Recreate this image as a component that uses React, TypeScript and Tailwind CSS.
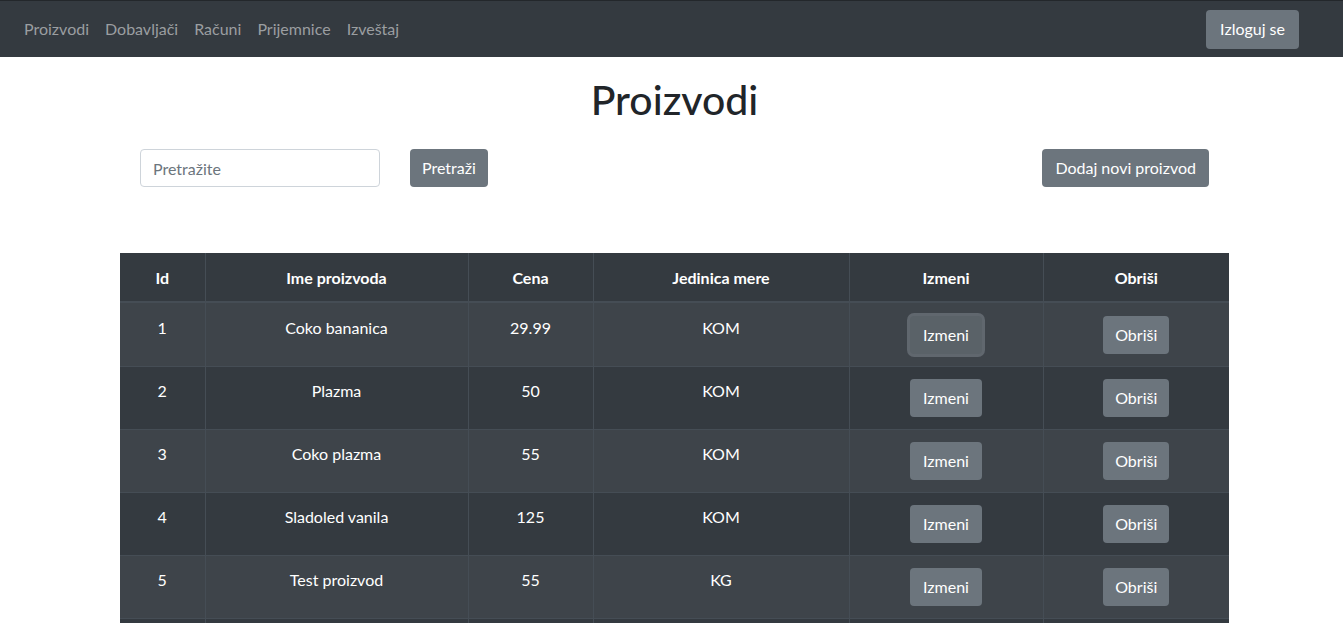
import React from "react";

const rows = [
  { id: 1, name: "Coko bananica", price: "29.99", unit: "KOM" },
  { id: 2, name: "Plazma", price: "50", unit: "KOM" },
  { id: 3, name: "Coko plazma", price: "55", unit: "KOM" },
  { id: 4, name: "Sladoled vanila", price: "125", unit: "KOM" },
  { id: 5, name: "Test proizvod", price: "55", unit: "KG" },
  { id: 6, name: "Test 2", price: "10", unit: "KOM" },
];

const font = { fontFamily: "Lato, 'Noto Sans', sans-serif" };

export default function App() {
  return (
    <div className="min-h-screen bg-white text-[16px] text-[#212529]" style={font}>
      <nav className="flex h-[57px] items-center border-t border-[#23272b] bg-[#343a40] pl-4 pr-[44px]">
        <div className="flex flex-1 items-center">
          {["Proizvodi", "Dobavljači", "Računi", "Prijemnice", "Izveštaj"].map((l) => (
            <a key={l} className="px-2 leading-6 text-[#9b9ea1]">
              {l}
            </a>
          ))}
        </div>
        <button className="h-[39px] rounded-[4px] bg-[#6c757d] px-[14px] text-white">Izloguj se</button>
      </nav>
      <div className="ml-[120px] w-[1109px]">
        <h1 className="mt-[19px] text-center text-[41px] leading-[48px] font-medium">Proizvodi</h1>
        <div className="mt-[25px] flex items-center px-5">
          <input
            placeholder="Pretražite"
            className="h-[38px] w-[240px] rounded-[4px] border border-[#ced4da] px-3 placeholder:text-[#6c757d]"
          />
          <button className="ml-[30px] h-[38px] rounded-[4px] bg-[#6c757d] px-3 text-white">Pretraži</button>
          <div className="flex-1" />
          <button className="h-[38px] rounded-[4px] bg-[#6c757d] px-[13px] text-white">Dodaj novi proizvod</button>
        </div>
        <table className="mt-[66px] w-full border-collapse text-center text-white">
          <colgroup>
            <col className="w-[85px]" />
            <col className="w-[263px]" />
            <col className="w-[125px]" />
            <col className="w-[256px]" />
            <col className="w-[194px]" />
            <col className="w-[186px]" />
          </colgroup>
          <thead>
            <tr className="bg-[#343a40]">
              {["Id", "Ime proizvoda", "Cena", "Jedinica mere", "Izmeni", "Obriši"].map((h) => (
                <th
                  key={h}
                  className="border-x border-b-2 border-[#454d55] px-3 pt-[13px] pb-[11px] align-bottom leading-6 font-bold first:border-l-0 last:border-r-0"
                >
                  {h}
                </th>
              ))}
            </tr>
          </thead>
          <tbody>
            {rows.map((r, i) => {
              const pad = i === 0 ? "px-3 pt-[13px] pb-3" : "p-3";
              const cell = "border-t border-[#454d55] align-top leading-6 " + pad;
              return (
                <tr key={r.id} className={i % 2 === 0 ? "bg-[#3e444a]" : "bg-[#343a40]"}>
                  <td className={cell + " border-r"}>{r.id}</td>
                  <td className={cell + " border-r"}>{r.name}</td>
                  <td className={cell + " border-r"}>{r.price}</td>
                  <td className={cell + " border-r"}>{r.unit}</td>
                  <td className={cell + " border-r"}>
                    <button
                      className={
                        "h-[38px] rounded-[4px] px-[13px] text-white " +
                        (i === 0
                          ? "bg-[#5a6268] shadow-[0_0_0_3px_rgba(130,138,145,0.5)]"
                          : "bg-[#6c757d]")
                      }
                    >
                      Izmeni
                    </button>
                  </td>
                  <td className={cell}>
                    <button className="h-[38px] rounded-[4px] bg-[#6c757d] px-3 text-white">Obriši</button>
                  </td>
                </tr>
              );
            })}
          </tbody>
        </table>
      </div>
    </div>
  );
}
